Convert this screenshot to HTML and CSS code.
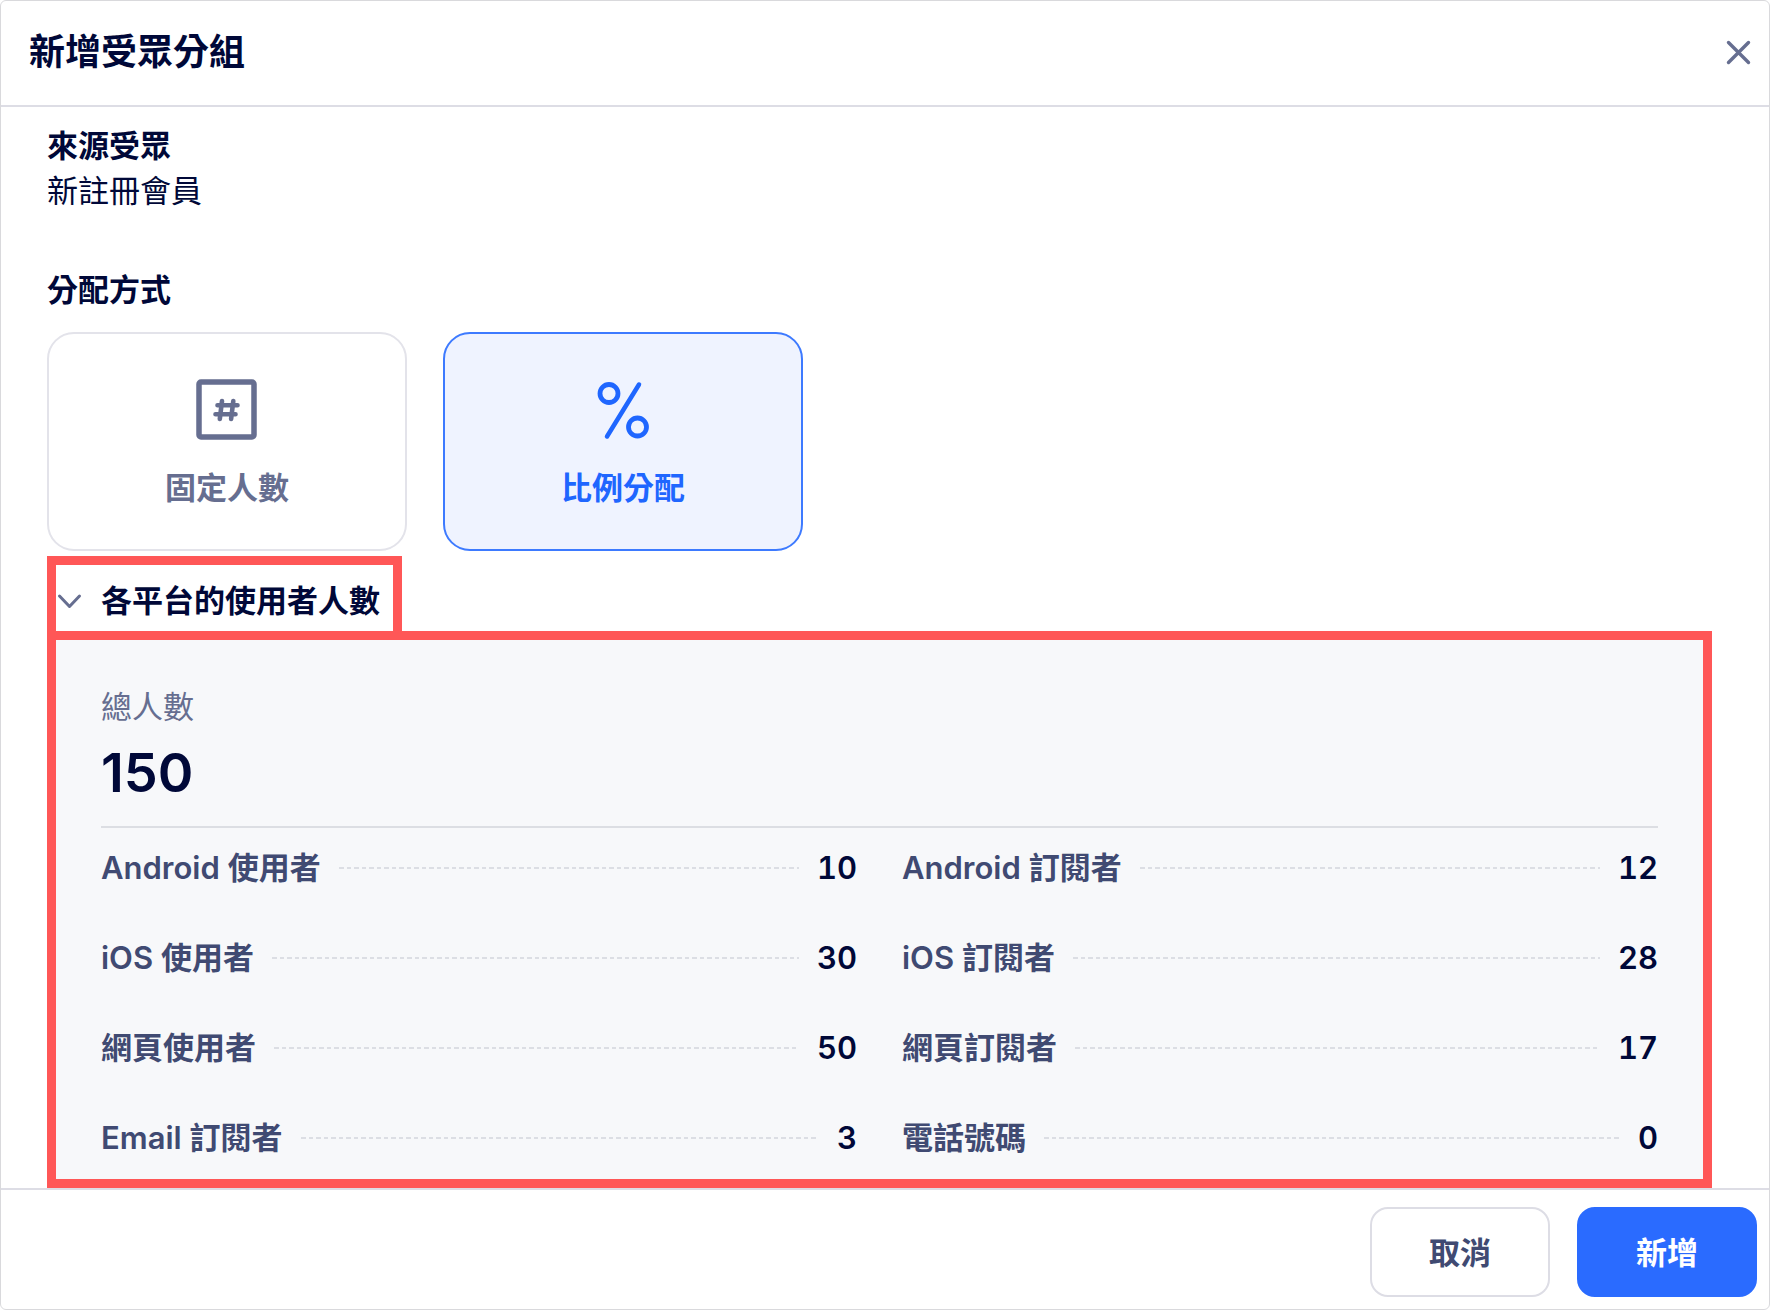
FILE: index.html
```html
<!DOCTYPE html>
<html lang="zh-Hant">
<head>
    <meta charset="UTF-8">
    <meta name="viewport" content="width=device-width, initial-scale=1.0">
    <title>新增受眾分組</title>
    <link rel="stylesheet" href="styles.css">
</head>
<body>

    <form class="modal">
        <header class="modal-header">
            <h1>新增受眾分組</h1>
            <button type="button" class="btn-close" aria-label="關閉">
                <svg width="36" height="36" viewBox="0 0 36 36" fill="none" stroke="currentColor" stroke-width="3.4" stroke-linecap="round">
                    <path d="M7.5 8.5l20 20M27.5 8.5l-20 20"/>
                </svg>
            </button>
        </header>

        <main class="modal-body">
            <section class="source">
                <h2>來源受眾</h2>
                <p>新註冊會員</p>
            </section>

            <section>
                <h2 id="method-title">分配方式</h2>
                <div class="methods" role="radiogroup" aria-labelledby="method-title">
                    <label class="method">
                        <input type="radio" name="method" value="fixed">
                        <svg width="72" height="72" viewBox="0 0 72 72" fill="none" stroke="currentColor" stroke-linecap="round">
                            <rect x="8" y="9" width="55" height="55" rx="2" stroke-width="5.5"/>
                            <path d="M31 28l-2.2 18M42.3 28l-2.2 18M26.5 32.3h20M24.5 41.3h20" stroke-width="4.6"/>
                        </svg>
                        <span>固定人數</span>
                    </label>
                    <label class="method">
                        <input type="radio" name="method" value="ratio" checked>
                        <svg width="72" height="72" viewBox="0 0 72 72" fill="none" stroke="currentColor" stroke-linecap="round">
                            <circle cx="22" cy="20.5" r="9" stroke-width="4.8"/>
                            <circle cx="50.5" cy="54" r="9" stroke-width="4.8"/>
                            <path d="M52 11.5L20 63.5" stroke-width="4.5"/>
                        </svg>
                        <span>比例分配</span>
                    </label>
                </div>
            </section>

            <section class="platforms">
                <button type="button" class="platforms-toggle" aria-expanded="true" aria-controls="platforms-panel">
                    <svg width="27" height="27" viewBox="0 0 27 27" fill="none" stroke="currentColor" stroke-width="3" stroke-linecap="round" stroke-linejoin="round">
                        <path d="M3.5 9l10 10.5L23.5 9"/>
                    </svg>
                    各平台的使用者人數
                </button>

                <div id="platforms-panel" class="platforms-panel">
                    <div class="total">
                        <p class="total-label">總人數</p>
                        <p class="total-value">150</p>
                    </div>
                    <dl class="stats">
                        <div class="stat"><dt>Android 使用者</dt><dd>10</dd></div>
                        <div class="stat"><dt>Android 訂閱者</dt><dd>12</dd></div>
                        <div class="stat"><dt>iOS 使用者</dt><dd>30</dd></div>
                        <div class="stat"><dt>iOS 訂閱者</dt><dd>28</dd></div>
                        <div class="stat"><dt>網頁使用者</dt><dd>50</dd></div>
                        <div class="stat"><dt>網頁訂閱者</dt><dd>17</dd></div>
                        <div class="stat"><dt>Email 訂閱者</dt><dd>3</dd></div>
                        <div class="stat"><dt>電話號碼</dt><dd>0</dd></div>
                    </dl>
                </div>
            </section>
        </main>

        <footer class="modal-footer">
            <button type="button" class="btn btn-cancel">取消</button>
            <button type="submit" class="btn btn-submit">新增</button>
        </footer>
    </form>

</body>
</html>
```

FILE: styles.css
```css
* {
    box-sizing: border-box;
}
body {
    margin: 0;
    background-color: #fff;
    color: #000838;
    font-family: Inter, 'Noto Sans CJK TC', sans-serif;
    font-size: 31px;
    line-height: 45px;
}
h1, h2, p, dl, dd {
    margin: 0;
}
button {
    font: inherit;
    cursor: pointer;
}
svg {
    display: block;
    flex-shrink: 0;
}
.modal {
    display: flex;
    flex-direction: column;
    min-height: 100vh;
    border: 1px solid #d9d9dc;
    border-radius: 6px;
}
.modal-header {
    display: flex;
    align-items: center;
    justify-content: space-between;
    padding: 24px 12px 26px 28px;
    border-bottom: 2px solid #dddde5;
}
h1 {
    font-size: 36px;
    line-height: 54px;
    font-weight: 600;
}
h2 {
    font-size: 31px;
    font-weight: 600;
}
.btn-close {
    padding: 0;
    border: none;
    background: none;
    color: #666e90;
}
.modal-body {
    flex: 1;
    padding: 16px 57px 0 46px;
}
.source {
    margin-bottom: 54px;
}
.methods {
    display: flex;
    gap: 36px;
    margin-top: 20px;
}
.method {
    position: relative;
    display: flex;
    flex-direction: column;
    align-items: center;
    gap: 20px;
    width: 360px;
    padding: 39px 20px;
    border: 2px solid #e3e3ea;
    border-radius: 27px;
    color: #666e90;
    font-weight: 600;
    cursor: pointer;
}
.method input {
    position: absolute;
    inset: 0;
    margin: 0;
    opacity: 0;
    cursor: pointer;
}
.method:has(input:checked) {
    border-color: #3d7aff;
    background-color: #eff3ff;
    color: #1f66ff;
}
.platforms {
    margin-top: 5px;
}
.platforms-toggle {
    display: flex;
    align-items: center;
    gap: 18px;
    padding: 13px 13px 8px 0;
    border: 9px solid #ff5757;
    border-bottom: none;
    background: none;
    color: #000838;
    font-weight: 600;
}
.platforms-toggle svg {
    color: #666e90;
}
.platforms-panel {
    padding: 44px 45px 19px;
    border: 9px solid #ff5757;
    background-color: #f7f8fa;
}
.total {
    padding-bottom: 18px;
    border-bottom: 2px solid #dcdee3;
}
.total-label {
    color: #666e90;
}
.total-value {
    margin-top: 9px;
    font-size: 54px;
    line-height: 70px;
    font-weight: 600;
}
.stats {
    display: grid;
    grid-template-columns: 1fr 1fr;
    gap: 45px;
    padding-top: 17px;
}
.stat {
    display: flex;
    align-items: center;
    gap: 18px;
    color: #404a72;
    font-weight: 600;
}
/* dashed leader between label and number */
.stat::before {
    content: '';
    order: 1;
    flex: 1;
    height: 2px;
    background: repeating-linear-gradient(to right, #dcdee4 0 5px, transparent 5px 8px, #dcdee4 8px 12px, transparent 12px 15px);
}
.stat dd {
    order: 2;
    color: #000838;
    font-variant-numeric: tabular-nums;
}
.modal-footer {
    display: flex;
    justify-content: flex-end;
    gap: 27px;
    padding: 17px 12px 12px;
    border-top: 2px solid #dddde5;
}
.btn {
    min-width: 180px;
    height: 90px;
    border: 2px solid #dddde5;
    border-radius: 18px;
    background-color: #fff;
    color: #404a72;
    font-weight: 600;
}
.btn-submit {
    border-color: #2a6bff;
    background-color: #2a6bff;
    color: #fff;
}
```
